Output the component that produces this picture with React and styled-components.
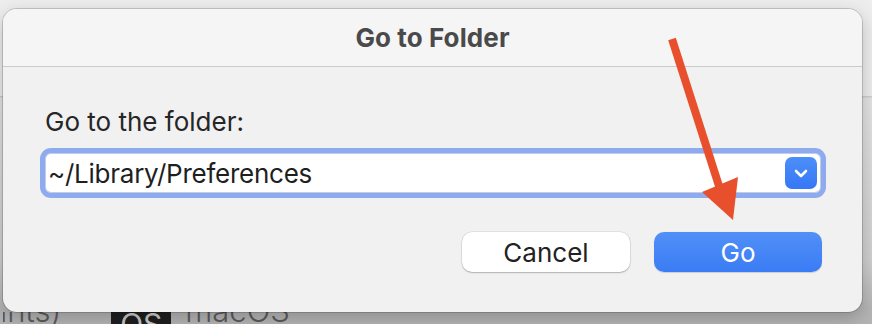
import React from "react";
import styled, { createGlobalStyle } from "styled-components";

const GlobalStyle = createGlobalStyle`
  html, body {
    margin: 0;
    padding: 0;
  }
  body {
    font-family: Inter, "Noto Sans", "Liberation Sans", sans-serif;
    -webkit-font-smoothing: antialiased;
  }
`;

const Page = styled.div`
  position: relative;
  width: 872px;
  height: 324px;
  overflow: hidden;
  display: flex;
  flex-direction: column;
  padding: 9px 0 0 3px;
  box-sizing: border-box;
  background: linear-gradient(
    #ededed 0,
    #ececec 96px,
    #cdcdcd 96px,
    #cdcdcd 97px,
    #e3e3e3 98px,
    #cfcfcf 260px,
    #b4b4b4 310px
  );
`;

const Dialog = styled.div`
  position: relative;
  z-index: 1;
  width: 859px;
  height: 303px;
  flex: none;
  display: flex;
  flex-direction: column;
  background: #f1f1f1;
  border-radius: 14px;
  box-shadow: 0 0 0 1px rgba(0, 0, 0, 0.16), 0 6px 18px rgba(0, 0, 0, 0.22);
  overflow: hidden;
`;

const TitleBar = styled.div`
  height: 57px;
  flex: none;
  display: flex;
  align-items: center;
  justify-content: center;
  background: #f6f5f6;
  border-bottom: 1px solid #cbcbcb;
`;

const Title = styled.h1`
  margin: 0;
  font-size: 26px;
  font-weight: 700;
  color: #4a4a4a;
  letter-spacing: 0.1px;
`;

const Body = styled.div`
  display: flex;
  flex-direction: column;
  padding: 40px 36px 0 37px;
`;

const Label = styled.div`
  margin-left: 5px;
  font-size: 26px;
  line-height: 30px;
  color: #262626;
`;

const FieldRing = styled.div`
  margin-top: 11px;
  height: 50px;
  box-sizing: border-box;
  padding: 5px;
  border-radius: 11px;
  background: #8dabee;
`;

const Field = styled.div`
  height: 100%;
  box-sizing: border-box;
  display: flex;
  align-items: center;
  justify-content: space-between;
  padding: 0 4px 0 3px;
  border-radius: 6px;
  background: #fff;
  box-shadow: inset 0 0 0 1px rgba(80, 110, 190, 0.35);
`;

const FieldText = styled.span`
  font-size: 26px;
  letter-spacing: -0.25px;
  color: #1f1f1f;
`;

const PopButton = styled.div`
  width: 32px;
  height: 32px;
  border-radius: 7px;
  display: flex;
  align-items: center;
  justify-content: center;
  background: linear-gradient(#4d8ff8, #3577f5);
`;

const Buttons = styled.div`
  margin-top: 34px;
  display: flex;
  justify-content: flex-end;
  gap: 24px;
  padding-right: 4px;
`;

const Button = styled.div`
  width: 168px;
  height: 40px;
  border-radius: 10px;
  display: flex;
  align-items: center;
  justify-content: center;
  font-size: 26px;
  color: ${(p) => (p.$primary ? "#fff" : "#222")};
  background: ${(p) =>
    p.$primary ? "linear-gradient(#5190f7, #3a7cf5)" : "#fff"};
  box-shadow: ${(p) =>
    p.$primary
      ? "0 0.5px 1px rgba(0,0,0,0.15)"
      : "0 0 0 0.5px rgba(0,0,0,0.12), 0 1px 1.5px rgba(0,0,0,0.22)"};
`;

const Behind = styled.div`
  height: 12px;
  flex: none;
  display: flex;
  align-items: flex-start;
  overflow: hidden;
`;

const BehindText = styled.span`
  margin: -19px 0 0 ${(p) => p.$left}px;
  font-size: 31px;
  line-height: 36px;
  font-weight: 300;
  color: #5b5b5b;
`;

const Badge = styled.span`
  margin: 0 0 0 50px;
  width: 60px;
  height: 20px;
  background: #1f1f1f;
  color: #c9c9c9;
  font-size: 30px;
  line-height: 20px;
  text-align: center;
  overflow: hidden;
  padding-top: 2px;
`;

const ArrowLayer = styled.svg`
  position: absolute;
  left: 0;
  top: 0;
  z-index: 2;
  pointer-events: none;
`;

export default function App() {
  return (
    <>
      <GlobalStyle />
      <Page>
        <Dialog>
          <TitleBar>
            <Title>Go to Folder</Title>
          </TitleBar>
          <Body>
            <Label>Go to the folder:</Label>
            <FieldRing>
              <Field>
                <FieldText>~/Library/Preferences</FieldText>
                <PopButton>
                  <svg width="14" height="9" viewBox="0 0 14 9">
                    <path
                      d="M2 2 L7 7 L12 2"
                      fill="none"
                      stroke="#fff"
                      strokeWidth="2.6"
                      strokeLinecap="round"
                      strokeLinejoin="round"
                    />
                  </svg>
                </PopButton>
              </Field>
            </FieldRing>
            <Buttons>
              <Button>Cancel</Button>
              <Button $primary>Go</Button>
            </Buttons>
          </Body>
        </Dialog>
        <Behind>
          <BehindText $left={-3}>ints)</BehindText>
          <Badge>OS</Badge>
          <BehindText $left={14}>macOS</BehindText>
        </Behind>
        <ArrowLayer width="872" height="324" viewBox="0 0 872 324">
          <line
            x1="672"
            y1="39"
            x2="719"
            y2="186"
            stroke="#e8502d"
            strokeWidth="8"
          />
          <polygon points="702,192 738,177 733,220" fill="#e8502d" />
        </ArrowLayer>
      </Page>
    </>
  );
}
